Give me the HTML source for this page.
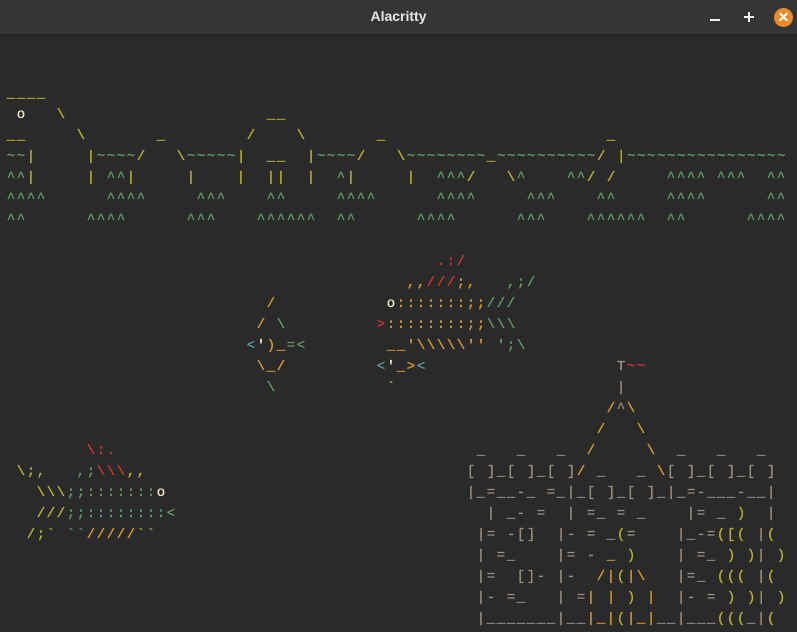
<!DOCTYPE html>
<html><head><meta charset="utf-8"><style>
html,body{margin:0;padding:0;background:#2a2a2a;width:797px;height:632px;overflow:hidden}
#tb{position:absolute;left:0;top:0;width:797px;height:34px;background:#353535;border-bottom:2px solid #262626}
#tt{position:absolute;left:0;width:797px;top:8px;text-align:center;color:#e6e6e6;font:bold 14px "Liberation Sans",sans-serif}
.min{position:absolute;left:710px;top:19px;width:10px;height:2px;background:#eee}
.plus1{position:absolute;left:744px;top:16px;width:10px;height:2px;background:#eee}
.plus2{position:absolute;left:748px;top:12px;width:2px;height:10px;background:#eee}
.cl{position:absolute;left:774px;top:8px;width:19px;height:19px;border-radius:50%;background:#f0892a;color:#fff;font:bold 14px "Liberation Sans",sans-serif;text-align:center;line-height:19px}
pre{position:absolute;left:6.7px;margin:0;font-family:"Liberation Mono",monospace;font-size:14px;letter-spacing:1.6px;line-height:21px;height:21px;white-space:pre;color:#9c9083;-webkit-text-stroke:0.3px}
.y{color:#b8b42a}.g{color:#5f9c68}.o{color:#d99b2a}.r{color:#d2332b}.c{color:#f0e6c8}.t{color:#5f9aa0}.k{color:#9c9083}
</style></head><body>
<div id="tb"><div id="tt">Alacritty</div><div class="min"></div><div class="plus1"></div><div class="plus2"></div><div class="cl">✕</div></div>
<pre style="top:84px"><span class="y">____</span></pre>
<pre style="top:105px"> <span class="c">o</span>   <span class="y">\</span>                    <span class="y">__</span></pre>
<pre style="top:126px"><span class="y">__     \       _        /    \       _                      _</span></pre>
<pre style="top:147px"><span class="g">~~</span><span class="y">|</span>     <span class="y">|</span><span class="g">~~~~</span><span class="y">/</span>   <span class="y">\</span><span class="g">~~~~~</span><span class="y">|  __  |</span><span class="g">~~~~</span><span class="y">/</span>   <span class="y">\</span><span class="g">~~~~~~~~</span><span class="y">_</span><span class="g">~~~~~~~~~~</span><span class="y">/ |</span><span class="g">~~~~~~~~~~~~~~~~</span></pre>
<pre style="top:168px"><span class="g">^^</span><span class="y">|     | </span><span class="g">^^</span><span class="y">|     |    |  ||  |  </span><span class="g">^</span><span class="y">|     |  </span><span class="g">^^^</span><span class="y">/   \</span><span class="g">^    ^^</span><span class="y">/ /</span><span class="g">     ^^^^ ^^^  ^^</span></pre>
<pre style="top:189px"><span class="g">^^^^      ^^^^     ^^^    ^^     ^^^^      ^^^^     ^^^    ^^     ^^^^      ^^</span></pre>
<pre style="top:210px"><span class="g">^^      ^^^^      ^^^    ^^^^^^  ^^      ^^^^      ^^^    ^^^^^^  ^^      ^^^^</span></pre>
<pre style="top:252px">                                           <span class="r">.:/</span></pre>
<pre style="top:273px">                                        <span class="o">,,</span><span class="r">///</span><span class="o">;,</span>   <span class="g">,;/</span></pre>
<pre style="top:294px">                          <span class="o">/</span>           <span class="c">o</span><span class="o">:::::::;;</span><span class="g">///</span></pre>
<pre style="top:315px">                         <span class="o">/</span> <span class="g">\</span>         <span class="r">&gt;</span><span class="o">::::::::;;</span><span class="g">\\\</span></pre>
<pre style="top:336px">                        <span class="t">&lt;</span><span class="c">'</span><span class="o">)_</span><span class="g">=&lt;</span>        <span class="o">__'\\\\\''</span> <span class="g">';\</span></pre>
<pre style="top:357px">                         <span class="o">\_/</span>         <span class="t">&lt;</span><span class="c">'</span><span class="o">_&gt;</span><span class="t">&lt;</span>                   <span class="k">T</span><span class="r">~~</span></pre>
<pre style="top:378px">                          <span class="g">\</span>           <span class="y">`</span>                      <span class="k">|</span></pre>
<pre style="top:399px">                                                            <span class="o">/</span><span class="k">^</span><span class="o">\</span></pre>
<pre style="top:420px">                                                           <span class="o">/   \</span></pre>
<pre style="top:441px">        <span class="r">\:.</span>                                    <span class="k">_   _   _  </span><span class="o">/     \</span><span class="k">  _   _   _</span></pre>
<pre style="top:462px"> <span class="y">\;,</span>   <span class="g">,;</span><span class="r">\\\</span><span class="y">,,</span>                                <span class="k">[ ]_[ ]_[ ]</span><span class="o">/</span><span class="k"> _   _ </span><span class="o">\</span><span class="k">[ ]_[ ]_[ ]</span></pre>
<pre style="top:483px">   <span class="y">\\\</span><span class="g">;;:::::::</span><span class="c">o</span>                              <span class="k">|_=__-_ =_|_[ ]_[ ]_|_=-___-__|</span></pre>
<pre style="top:504px">   <span class="y">///</span><span class="g">;;::::::::&lt;</span>                              <span class="k"> | _- =  | =_ = _    |= _ </span><span class="y">)</span><span class="k">  |</span></pre>
<pre style="top:525px">  <span class="y">/;`</span> <span class="g">``</span><span class="o">/////</span><span class="y">``</span>                               <span class="k"> |= -[]  |- = _</span><span class="y">(</span><span class="k">=    |_-=</span><span class="y">([(</span><span class="k"> |</span><span class="y">(</span></pre>
<pre style="top:546px">                                              <span class="k"> | =_    |= - </span><span class="o">_</span> <span class="y">)</span><span class="k">    | =_ </span><span class="y">)</span> <span class="y">)</span><span class="k">| </span><span class="y">)</span></pre>
<pre style="top:567px">                                              <span class="k"> |=  []- |-  </span><span class="o">/|</span><span class="y">(</span><span class="o">|\</span><span class="k">   |=_ </span><span class="y">(((</span><span class="k"> |</span><span class="y">(</span></pre>
<pre style="top:588px">                                              <span class="k"> |- =_   | =</span><span class="o">|</span> <span class="o">|</span> <span class="y">)</span> <span class="o">|</span><span class="k">  |- = </span><span class="y">)</span> <span class="y">)</span><span class="k">| </span><span class="y">)</span></pre>
<pre style="top:609px">                                              <span class="k"> |_______|__</span><span class="o">|_|</span><span class="y">(</span><span class="o">|_|</span><span class="k">__|___</span><span class="y">(((</span><span class="k">_|</span><span class="y">(</span></pre>
</body></html>
